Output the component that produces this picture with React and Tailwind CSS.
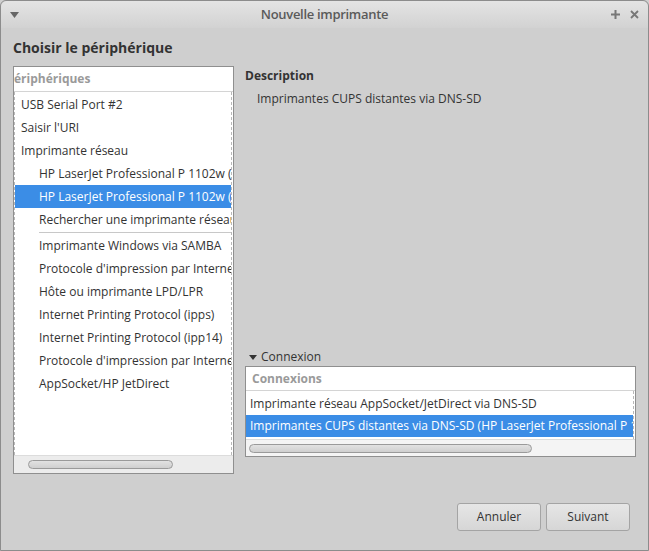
import React from 'react';

const devices = [
  { label: 'USB Serial Port #2', indent: false },
  { label: "Saisir l'URI", indent: false },
  { label: 'Imprimante réseau', indent: false },
  { label: 'HP LaserJet Professional P 1102w (HP LaserJet Professional P 1102w)', indent: true },
  { label: 'HP LaserJet Professional P 1102w (HP LaserJet)', indent: true, selected: true },
  { label: 'Rechercher une imprimante réseau', indent: true },
  { sep: true },
  { label: 'Imprimante Windows via SAMBA', indent: true },
  { label: "Protocole d'impression par Internet (http)", indent: true },
  { label: 'Hôte ou imprimante LPD/LPR', indent: true },
  { label: 'Internet Printing Protocol (ipps)', indent: true },
  { label: 'Internet Printing Protocol (ipp14)', indent: true },
  { label: "Protocole d'impression par Internet (https)", indent: true },
  { label: 'AppSocket/HP JetDirect', indent: true },
];

const font = { fontFamily: '"Open Sans", "Noto Sans", sans-serif' };

export default function App() {
  return (
    <div className="w-[649px] h-[551px] bg-[#cfcfcf] text-[#333] text-[12px] overflow-hidden" style={font}>
      <div className="w-full h-full border border-[#8c8c8c] rounded-t-[6px] flex flex-col">
        {/* title bar */}
        <div className="h-[27px] shrink-0 rounded-t-[6px] bg-gradient-to-b from-[#e4e4e4] to-[#d2d2d2] flex items-center px-[9px] text-[#5a5a5a]">
          <div className="w-[40px]">
            <svg width="9" height="6" viewBox="0 0 9 6"><path d="M0 0h9L4.5 6z" fill="#666" /></svg>
          </div>
          <span className="flex-1 text-center font-semibold text-[13px] tracking-[-0.3px]">Nouvelle imprimante</span>
          <div className="w-[40px] flex justify-end items-center gap-[10px]">
            <svg width="9" height="9" viewBox="0 0 9 9"><path d="M4.5 0v9M0 4.5h9" stroke="#777" strokeWidth="2" /></svg>
            <svg width="9" height="9" viewBox="0 0 9 9"><path d="M1 1l7 7M8 1l-7 7" stroke="#777" strokeWidth="1.8" /></svg>
          </div>
        </div>

        <div className="flex-1 flex flex-col px-[12px]">
          <div className="h-[38px] flex items-center font-bold text-[14px] text-[#333]">Choisir le périphérique</div>

          <div className="flex gap-[11px] h-[408px]">
            {/* left list */}
            <div className="w-[221px] shrink-0 border border-[#8f8f8f] bg-white flex flex-col overflow-hidden">
              <div className="h-[25px] shrink-0 flex items-center border-b border-[#d4d4d4] text-[#9a9a9a] font-bold whitespace-nowrap">
                <span>ériphériques</span>
              </div>
              <div className="flex-1 min-h-0 border-l border-r border-dashed border-[#b8b8b8] mr-[1px]">
                <div className="pt-[1px]">
                  {devices.map((d, i) =>
                    d.sep ? (
                      <div key={i} className="ml-[24px] h-[1px] bg-[#c8c8c8] my-[1px]" />
                    ) : (
                      <div
                        key={i}
                        className={
                          'h-[23px] flex items-center whitespace-nowrap overflow-hidden ' +
                          (d.indent ? 'pl-[24px] ' : 'pl-[6px] ') +
                          (d.selected ? 'bg-[#3b8de6] text-white' : '')
                        }
                      >
                        {d.label}
                      </div>
                    )
                  )}
                </div>
              </div>
              <div className="h-[18px] shrink-0 bg-[#ececec] border-t border-[#dcdcdc] flex items-center pl-[14px]">
                <div className="h-[9px] w-[145px] rounded-full border border-[#9a9a9a] bg-gradient-to-b from-[#e2e2e2] to-[#cfcfcf]" />
              </div>
            </div>

            {/* right column */}
            <div className="w-[392px] min-w-0 flex flex-col">
              <div className="font-bold mt-[1px] h-[18px] flex items-center">Description</div>
              <div className="pl-[12px] mt-[5px] h-[18px] flex items-center">Imprimantes CUPS distantes via DNS-SD</div>
              <div className="flex-1" />
              <div className="flex items-center h-[18px] pl-[4px] gap-[4px]">
                <svg width="8" height="5" viewBox="0 0 8 5"><path d="M0 0h8L4 5z" fill="#333" /></svg>
                <span>Connexion</span>
              </div>
              <div className="h-[91px] border border-[#8f8f8f] bg-white flex flex-col overflow-hidden mb-[17px]">
                <div className="h-[24px] shrink-0 flex items-center border-b border-[#d4d4d4] text-[#9a9a9a] font-bold pl-[6px]">Connexions</div>
                <div className="flex-1 min-h-0 border-r border-dashed border-[#b8b8b8] mr-[1px] pt-[1px]">
                  <div className="h-[23px] flex items-center pl-[4px] whitespace-nowrap overflow-hidden">Imprimante réseau AppSocket/JetDirect via DNS-SD</div>
                  <div className="h-[22px] flex items-center pl-[4px] whitespace-nowrap overflow-hidden bg-[#3b8de6] text-white">Imprimantes CUPS distantes via DNS-SD (HP LaserJet Professional P 1102w)</div>
                </div>
                <div className="h-[17px] shrink-0 bg-[#f4f4f4] border-t border-[#dcdcdc] flex items-center pl-[3px]">
                  <div className="h-[9px] w-[283px] rounded-full border border-[#9a9a9a] bg-gradient-to-b from-[#e2e2e2] to-[#cfcfcf]" />
                </div>
              </div>
            </div>
          </div>

          <div className="flex justify-end gap-[5px] mt-[29px] pr-[6px]">
            <button className="w-[84px] h-[28px] rounded-[3px] border border-[#a4a4a4] bg-gradient-to-b from-[#e6e6e6] to-[#d6d6d6] text-[#333] text-[12px]">Annuler</button>
            <button className="w-[84px] h-[28px] rounded-[3px] border border-[#a4a4a4] bg-gradient-to-b from-[#e6e6e6] to-[#d6d6d6] text-[#333] text-[12px]">Suivant</button>
          </div>
        </div>
      </div>
    </div>
  );
}
